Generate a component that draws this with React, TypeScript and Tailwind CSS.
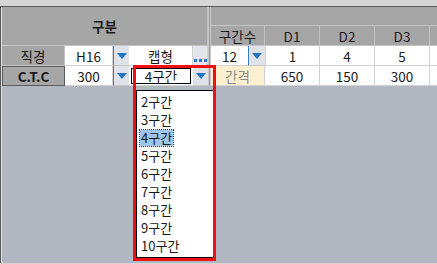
const font = { fontFamily: '"Noto Sans CJK KR", "Noto Sans", sans-serif' };

function DropBtn({ line = true }: { line?: boolean }) {
  return (
    <div
      className={`flex items-center justify-center bg-[#dfe2e8] border-b border-[#c8c8c8] ${
        line ? "border-l border-l-[#3a7fc4]" : ""
      }`}
    >
      <svg width="10" height="6" viewBox="0 0 10 6">
        <path d="M0 0 H10 L5 6 Z" fill="#1f74c4" />
      </svg>
    </div>
  );
}

const items = ["2구간", "3구간", "4구간", "5구간", "6구간", "7구간", "8구간", "9구간", "10구간"];

export default function App() {
  const hd = "bg-[#a6a6a6] border-r border-b border-[#c4c4c4] flex items-center justify-center text-[#1a1a1a]";
  const cell = "bg-white border-r border-b border-[#d2d2d2] flex items-center justify-center text-[#1a1a1a]";

  return (
    <div className="relative w-[437px] h-[264px] overflow-hidden bg-[#d6d6d6] text-[13.5px] leading-[16px]" style={font}>
      <div className="h-[7px] border-b border-[#5a5a5a]" />
      <div className="flex h-[256px]">
        <div className="w-[5px] border-r border-[#5a5a5a] bg-[#d6d6d6]" />
        <div className="flex-1 bg-[#b3b7c1] border-l border-[#e0e0e0]">
          <div className="grid grid-cols-[63px_48px_16px_64px_15px_3px_37px_17px_55px_55px_55px_20px] grid-rows-[19px_20px_20px_20px]">
            <div className={`${hd} col-span-5 row-span-2 font-bold`}>구분</div>
            <div className="row-span-4 bg-[#9c9c9c] border-x border-[#c8c8c8]" />
            <div className="col-span-6 bg-[#a6a6a6] border-b border-[#c4c4c4]" />
            <div className={`${hd} col-span-2`}>구간수</div>
            <div className={hd}>D1</div>
            <div className={hd}>D2</div>
            <div className={hd}>D3</div>
            <div className="bg-[#a6a6a6] border-b border-[#c4c4c4]" />

            <div className={hd}>직경</div>
            <div className={cell}>H16</div>
            <DropBtn />
            <div className={cell}>캡형</div>
            <div className="bg-[#e4e6eb] border-r border-b border-[#d2d2d2] flex items-end justify-center pb-[3px] gap-[2px]">
              <span className="w-[3px] h-[3px] bg-[#2a79c8]" />
              <span className="w-[3px] h-[3px] bg-[#2a79c8]" />
              <span className="w-[3px] h-[3px] bg-[#2a79c8]" />
            </div>
            <div className={`${cell} border-r-0`}>12</div>
            <DropBtn />
            <div className={`${cell} border-l border-l-[#d2d2d2]`}>1</div>
            <div className={cell}>4</div>
            <div className={cell}>5</div>
            <div className="bg-white border-b border-[#d2d2d2]" />

            <div className="bg-[#a6a6a6] border border-[#5a5a5a] flex items-center justify-center font-bold text-[#1a1a1a]">
              C.T.C
            </div>
            <div className={cell}>300</div>
            <DropBtn />
            <div className="bg-white border-b border-[#d2d2d2] p-[2px] pb-[1px]">
              <div className="h-full border border-black flex items-center justify-center text-[#1a1a1a]">4구간</div>
            </div>
            <DropBtn line={false} />
            <div className="col-span-2 bg-[#fcf0d0] border-r border-b border-[#d2d2d2] flex items-center justify-center text-[#8c8c8c]">
              간격
            </div>
            <div className={cell}>650</div>
            <div className={cell}>150</div>
            <div className={cell}>300</div>
            <div className="bg-white border-b border-[#d2d2d2]" />
          </div>
        </div>
      </div>

      <div className="absolute left-[136px] top-[90px] w-[78px] h-[168px] bg-white border border-black pt-[2px] text-[13px]">
        {items.map((it) => (
          <div key={it} className="h-[18px] flex items-center pl-[3px] text-[#1a1a1a]">
            <span
              className={
                it === "4구간"
                  ? "bg-[#9cc6ec] outline-1 outline-dotted outline-[#333] px-[1px] leading-[16px]"
                  : "px-[1px] leading-[16px]"
              }
            >
              {it}
            </span>
          </div>
        ))}
      </div>
      <div className="absolute left-[133px] top-[65px] w-[83px] h-[196px] border-[3px] border-[#f01010] pointer-events-none" />
    </div>
  );
}
